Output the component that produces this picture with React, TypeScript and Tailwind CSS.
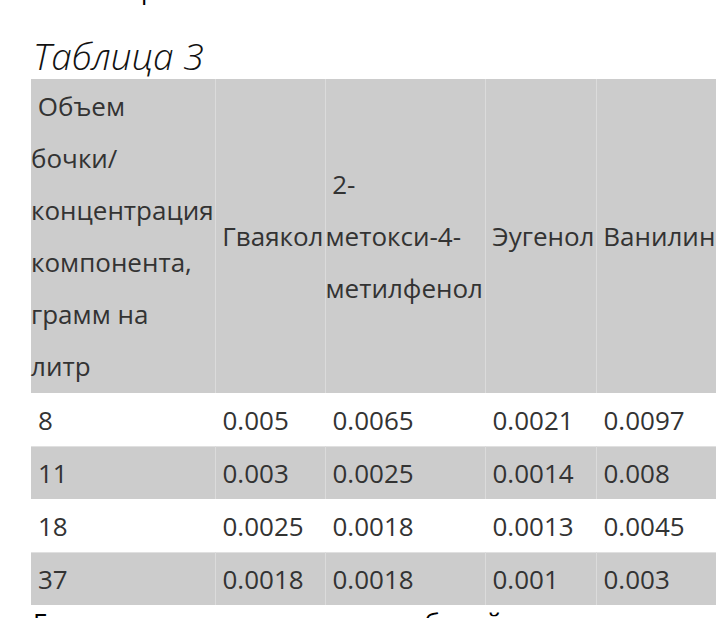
import React from "react";

const rows = [
  ["8", "0.005", "0.0065", "0.0021", "0.0097"],
  ["11", "0.003", "0.0025", "0.0014", "0.008"],
  ["18", "0.0025", "0.0018", "0.0013", "0.0045"],
  ["37", "0.0018", "0.0018", "0.001", "0.003"],
];

export default function App() {
  return (
    <div className="w-[716px] h-[618px] overflow-hidden bg-white font-['Open_Sans',sans-serif] text-[26px] text-[#333]">
      <p className="-mt-[37px] pl-[141px] text-[25px] leading-[52px] text-black">р</p>
      <h2 className="pl-[33px] mt-[17px] text-[37px] leading-[47px] italic font-light text-[#111]">Таблица 3</h2>
      <table className="ml-[31px] w-[686px] table-fixed border-collapse leading-[52px]">
        <colgroup>
          <col className="w-[184px]" />
          <col className="w-[110px]" />
          <col className="w-[160px]" />
          <col className="w-[111px]" />
          <col className="w-[121px]" />
        </colgroup>
        <thead>
          <tr className="h-[314px] bg-[#cccccc] align-middle text-left font-normal">
            <th className="border-r border-white/30 p-0 font-normal whitespace-nowrap">
              {"\u00a0Объем"}<br />бочки/<br />концентрация<br />компонента,<br />грамм на<br />литр
            </th>
            <th className="border-r border-white/30 p-0 font-normal whitespace-nowrap">{"\u00a0Гваякол"}</th>
            <th className="border-r border-white/30 p-0 font-normal whitespace-nowrap">
              {"\u00a02-"}<br />метокси-4-<br />метилфенол
            </th>
            <th className="border-r border-white/30 p-0 font-normal whitespace-nowrap">{"\u00a0Эугенол"}</th>
            <th className="p-0 font-normal whitespace-nowrap">{"\u00a0Ванилин"}</th>
          </tr>
        </thead>
        <tbody>
          {rows.map((r, i) => (
            <tr key={i} className={`border-t border-white/40 ${i % 2 === 1 ? "bg-[#cccccc]" : "bg-white"}`}>
              {r.map((c, j) => (
                <td key={j} className={`p-0 pl-[7px] whitespace-nowrap ${j < 4 ? "border-r border-white/30" : ""}`}>
                  {c}
                </td>
              ))}
            </tr>
          ))}
        </tbody>
      </table>
      <p className="pl-[33px] leading-[35px] text-black">Гваякол проходит в вино из дубовой массы</p>
    </div>
  );
}
